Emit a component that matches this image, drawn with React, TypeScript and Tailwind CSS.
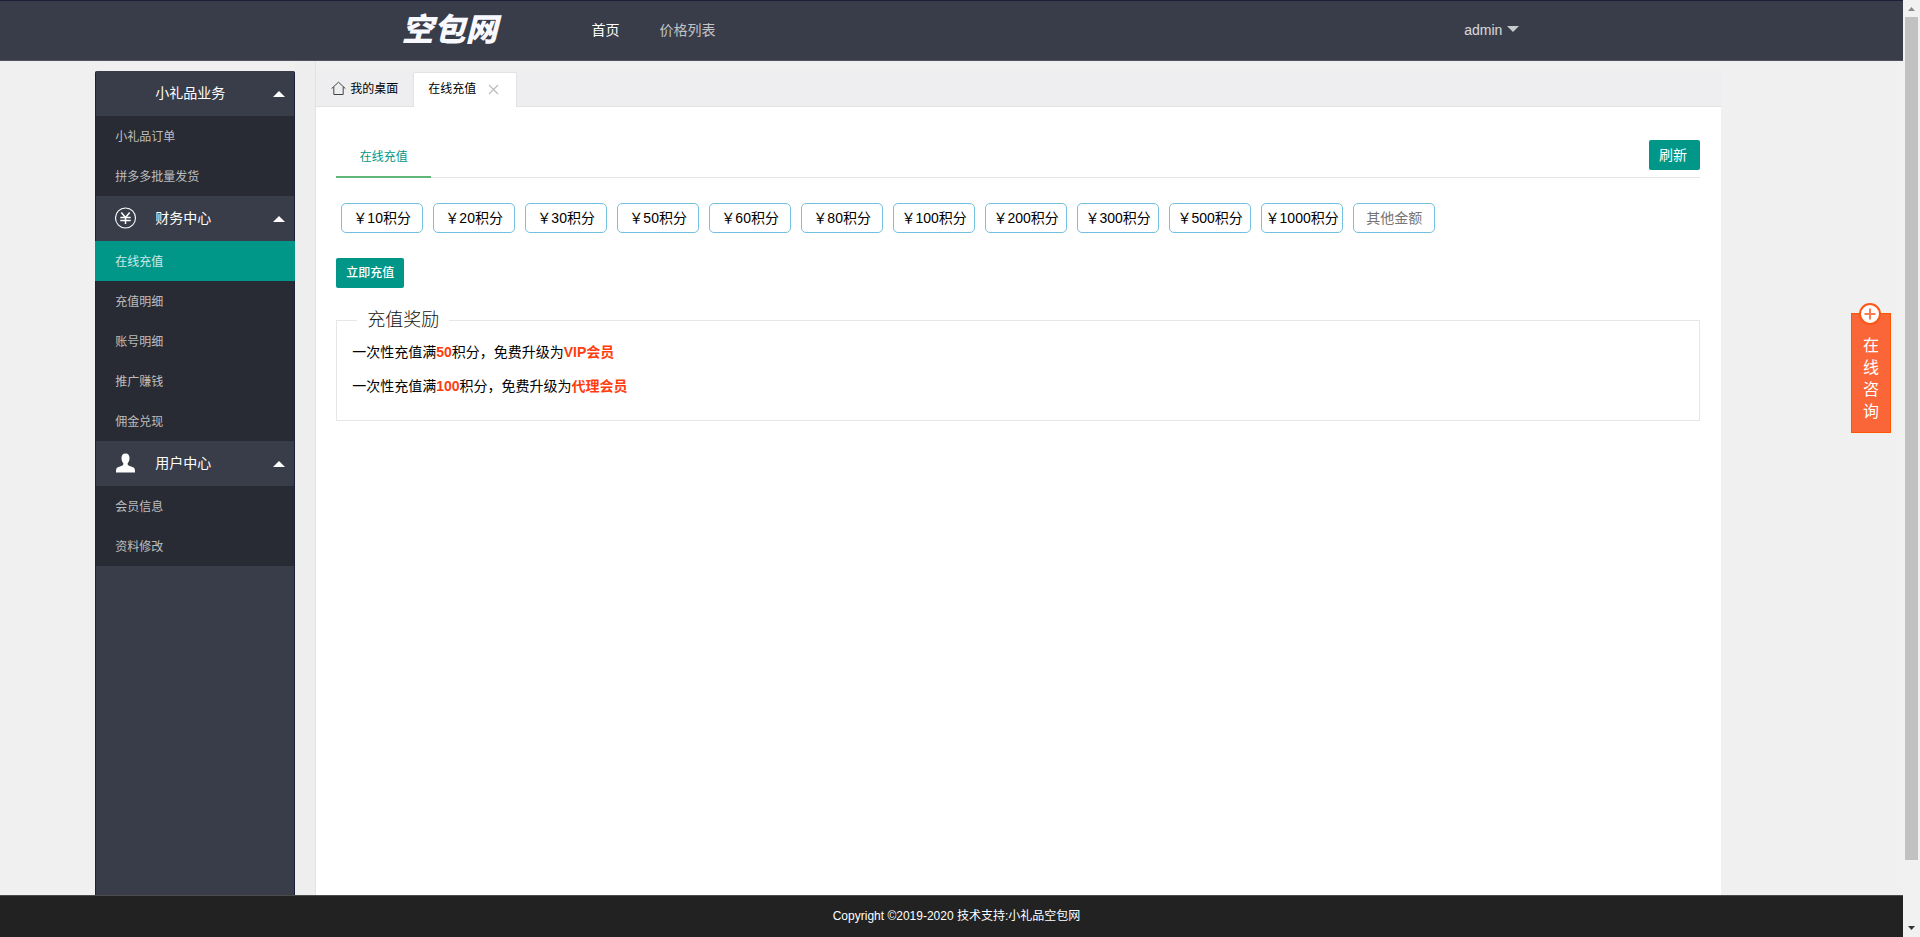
import React, { useState } from 'react';

interface MenuGroup {
  title: string;
  icon: 'none' | 'money' | 'user';
  items: string[];
}

const menu: MenuGroup[] = [
  { title: '小礼品业务', icon: 'none', items: ['小礼品订单', '拼多多批量发货'] },
  { title: '财务中心', icon: 'money', items: ['在线充值', '充值明细', '账号明细', '推广赚钱', '佣金兑现'] },
  { title: '用户中心', icon: 'user', items: ['会员信息', '资料修改'] }
];

const amounts = [10, 20, 30, 50, 60, 80, 100, 200, 300, 500, 1000];

const MenuIcon: React.FC<{ name: MenuGroup['icon'] }> = ({ name }) => {
  if (name === 'money') {
    return (
      <svg width="22" height="22" viewBox="0 0 22 22" fill="none" stroke="#fff">
        <circle cx="10.5" cy="11" r="10" strokeWidth="1.1" />
        <path d="M6.3 5.5 L10.5 10.5 L14.7 5.5 M5.3 10.6 H15.7 M5.3 13.4 H15.7 M10.5 10.5 V17" strokeWidth="1.5" />
      </svg>
    );
  }
  if (name === 'user') {
    return (
      <svg width="22" height="22" viewBox="0 0 22 22" fill="#fff">
        <path d="M10.5 1.5 C13.3 1.5 14.5 3.3 14.5 6 C14.5 8.4 13.6 10.2 12.7 11.3 C12.5 12.6 12.8 13.3 14 13.8 L18 15.3 C19.6 16 20 17 20 20.5 H1 C1 17 1.4 16 3 15.3 L7 13.8 C8.2 13.3 8.5 12.6 8.3 11.3 C7.4 10.2 6.5 8.4 6.5 6 C6.5 3.3 7.7 1.5 10.5 1.5 Z" />
      </svg>
    );
  }
  return null;
};

const Header: React.FC = () => (
  <header className="h-[61px] bg-[#393d49] border-t border-t-[#1b2138] border-b border-b-[#50535e]">
    <div className="w-3/5 h-full mx-auto pl-[21px] pb-[2px] flex items-center">
      <a href="#" className="w-[170px] text-[32px] leading-none font-black italic text-[#f8f8ff]">空包网</a>
      <nav className="flex text-sm">
        <a href="#" className="px-5 text-white">首页</a>
        <a href="#" className="px-5 text-white/70">价格列表</a>
      </nav>
      <button className="ml-auto mr-[3px] flex items-center gap-[5px] text-sm text-white/80">
        admin
        <svg width="12" height="6" viewBox="0 0 12 6" className="mb-[2px]" fill="#c9cacd">
          <path d="M0 0 H12 L6 6 Z" />
        </svg>
      </button>
    </div>
  </header>
);

const Sidebar: React.FC = () => {
  const [active, setActive] = useState('在线充值');

  return (
    <aside className="w-[200px] shrink-0 mt-[10px] rounded-t-xs bg-[#393d49] border-x border-[#1b2138]">
      {menu.map((group) => (
        <div key={group.title}>
          <button className="w-full h-[45px] pl-[19px] pr-[9px] pb-[2px] flex items-center text-sm text-white">
            <span className="w-10">
              <MenuIcon name={group.icon} />
            </span>
            {group.title}
            <svg width="12" height="6" viewBox="0 0 12 6" className="ml-auto mt-[2px]" fill="#fff">
              <path d="M0 6 H12 L6 0 Z" />
            </svg>
          </button>
          <ul className="bg-[#282b33]">
            {group.items.map((item) => (
              <li key={item}>
                <a
                  href="#"
                  onClick={() => setActive(item)}
                  className={`flex items-center h-10 -mx-px pl-5 pt-[2px] text-xs ${item === active ? 'bg-[#009688] text-white/80' : 'text-white/70'}`}
                >
                  {item}
                </a>
              </li>
            ))}
          </ul>
        </div>
      ))}
    </aside>
  );
};

const TabBar: React.FC = () => (
  <div className="mt-[10px] h-9 flex items-end bg-[#eeeef0] border-b border-[#e2e2e2] text-xs text-black">
    <button className="h-[35px] w-[97px] pl-[15px] flex items-center gap-1">
      <svg width="15" height="15" viewBox="0 0 15 15" fill="none" stroke="#444" strokeWidth="1">
        <path d="M0.6 7.6 L7.5 1.2 L14.4 7.6 M2.8 6 V13.5 H12.2 V6" />
      </svg>
      我的桌面
    </button>
    <div className="h-[35px] -mb-px w-[104px] pl-[14px] pb-[2px] flex items-center bg-white border-x border-t border-[#e2e2e2] rounded-t-xs">
      <button>在线充值</button>
      <button aria-label="关闭" className="ml-3">
        <svg width="11" height="11" viewBox="0 0 11 11" fill="none" stroke="#bbb" strokeWidth="1.2">
          <path d="M1 1 L10 10 M10 1 L1 10" />
        </svg>
      </button>
    </div>
  </div>
);

const Recharge: React.FC = () => (
  <div className="pl-5 pr-[21px] pt-[31px] text-sm text-black">
    <div className="h-10 flex items-start justify-between border-b border-[#e6e6e6]">
      <button className="h-10 w-[95px] shrink-0 border-b-2 border-[#5fb878] text-xs text-[#009688]">在线充值</button>
      <button className="mt-[2px] h-[30px] w-[51px] rounded-xs bg-[#009688] pr-[3px] text-white">刷新</button>
    </div>

    <div className="mt-[25px] pl-[5px] flex flex-wrap gap-[10px]">
      {amounts.map((n) => (
        <button key={n} className="h-[30px] w-[82px] rounded-[5px] border border-[#73bfdf] whitespace-nowrap">
          ￥{n}积分
        </button>
      ))}
      <input
        type="text"
        aria-label="其他金额"
        placeholder="其他金额"
        className="h-[30px] w-[82px] rounded-[5px] border border-[#73bfdf] text-center placeholder:text-[#757575]"
      />
    </div>

    <button className="mt-[25px] block h-[30px] w-[68px] rounded-xs bg-[#009688] text-xs font-medium text-white">立即充值</button>

    <fieldset className="mt-[18px] h-[115px] border border-[#e6e6e6] px-[15px]">
      <legend className="ml-[5px] px-[10px] text-lg font-light text-[#111]">充值奖励</legend>
      <p className="pt-px leading-[34px]">
        一次性充值满<b className="text-[#ff3d0d]">50</b>积分，免费升级为<b className="text-[#ff3d0d]">VIP会员</b>
      </p>
      <p className="leading-[34px]">
        一次性充值满<b className="text-[#ff3d0d]">100</b>积分，免费升级为<b className="text-[#ff3d0d]">代理会员</b>
      </p>
    </fieldset>
  </div>
);

const ServiceButton: React.FC = () => (
  <button className="absolute top-[313px] right-3 w-10 h-[120px] flex flex-col items-center bg-[#fa6638] border border-[#ff5500] text-white">
    <svg width="24" height="22" viewBox="0 0 24 22" className="-mt-[11px] shrink-0" fill="none">
      <circle cx="11" cy="11" r="10" fill="#fff" stroke="#fb5716" strokeWidth="2" />
      <path d="M11 5.5 V16.5 M5.5 11 H16.5" stroke="#fa7a54" strokeWidth="2" />
    </svg>
    <span className="mt-[10px] w-4 text-base leading-[22px]">在线咨询</span>
  </button>
);

const ScrollBar: React.FC = () => (
  <div className="w-[17px] shrink-0 flex flex-col items-center bg-[#f1f1f1]">
    <svg width="17" height="17" viewBox="0 0 17 17" className="shrink-0" fill="#8b8b8b">
      <path d="M5 11 H12 L8.5 7 Z" />
    </svg>
    <div className="w-[13px] grow-[843] bg-[#c1c1c1]" />
    <div className="grow-[60]" />
    <svg width="17" height="17" viewBox="0 0 17 17" className="shrink-0" fill="#333">
      <path d="M5 6 H12 L8.5 10 Z" />
    </svg>
  </div>
);

const App: React.FC = () => (
  <div className="min-h-screen flex bg-[#f0f0f0] font-['Liberation_Sans','Noto_Sans_CJK_SC',sans-serif]">
    <div className="relative grow min-w-0 flex flex-col">
      <Header />
      <div className="grow flex pl-[5%] pr-[182px]">
        <Sidebar />
        <div className="w-5 shrink-0 bg-[#eee]" />
        <main className="grow min-w-0 flex flex-col border-l border-[#e2e2e2]">
          <TabBar />
          <div className="grow bg-white">
            <Recharge />
          </div>
        </main>
      </div>
      <footer className="h-[42px] pl-[10px] pb-px flex items-center justify-center bg-[#222] border-t border-[#4a4a4a] text-xs text-white">
        <p>Copyright ©2019-2020 技术支持:小礼品空包网</p>
      </footer>
      <ServiceButton />
    </div>
    <ScrollBar />
  </div>
);

export default App;
